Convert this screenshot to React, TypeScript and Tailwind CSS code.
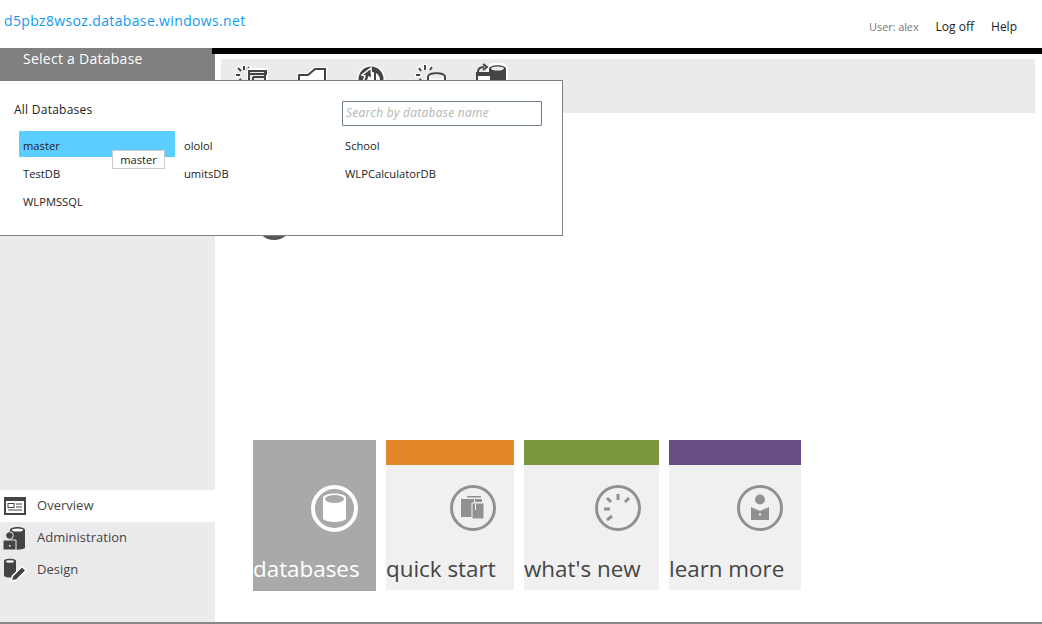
import React from "react";

const font = "font-['Open_Sans',sans-serif]";

const databases = ["master", "ololol", "School", "TestDB", "umitsDB", "WLPCalculatorDB", "WLPMSSQL"];

const ToolbarIcons = () => (
  <div className="flex h-[54px] w-[814px] gap-[26px] bg-[#ebebed] pl-[13px] pt-[4px]">
    {/* spinner + box */}
    <svg width="34" height="30" viewBox="0 0 34 30" fill="none">
      <path d="M10 2v5M3 4l3 3M1 12h5M4 20l3-3M16 3l-2 3" stroke="#fff" strokeWidth="4" />
      <path d="M10 3v4M4 5l3 3M2 12h4M4 19l3-3M15 4l-2 3" stroke="#444" strokeWidth="2" />
      <rect x="13" y="5" width="21" height="20" fill="#fff" />
      <path d="M15 8h17v16H15z" fill="#ebebed" />
      <path d="M15 8h17v3H15zM19 14h13M15 8v16M31 8v16M19 14v10" stroke="#444" strokeWidth="2" fill="none" />
    </svg>
    {/* folder */}
    <svg width="34" height="30" viewBox="0 0 34 30" fill="none">
      <path d="M3 26V10h10l7-6h13v22z" fill="#fff" />
      <path d="M5 25V12h9l7-6h10v19" stroke="#444" strokeWidth="2" fill="none" />
    </svg>
    {/* refresh */}
    <svg width="34" height="30" viewBox="0 0 34 30" fill="none">
      <circle cx="17" cy="16" r="14" fill="#fff" />
      <circle cx="17" cy="16" r="12.500" fill="#444" />
      <circle cx="18" cy="17" r="8" fill="#fff" />
      <path d="M7 25l4-12-3-1 9-7 1 11-3-2-4 11z" fill="#444" stroke="#fff" strokeWidth="1.500" />
      <path d="M21 8v9" stroke="#444" strokeWidth="2" />
    </svg>
    {/* spinner + cylinder */}
    <svg width="34" height="30" viewBox="0 0 34 30" fill="none">
      <path d="M11 1v6M18 3l-2 4M4 4l3 3M1 12h5M4 20l3-3" stroke="#fff" strokeWidth="4" />
      <path d="M11 2v5M18 4l-2 3M5 5l2 3M2 12h4M4 19l3-3" stroke="#444" strokeWidth="2" />
      <path d="M14 14c0-5 17-5 17 0v12H14z" fill="#fff" stroke="#444" strokeWidth="2" />
      <ellipse cx="22.500" cy="14" rx="7" ry="2.500" fill="#ebebed" />
    </svg>
    {/* export to cylinder */}
    <svg width="34" height="30" viewBox="0 0 34 30" fill="none">
      <rect x="13" y="0" width="21" height="28" rx="6" fill="#fff" />
      <path d="M15 6c0-5 17-5 17 0v20H15z" fill="#444" />
      <ellipse cx="23.500" cy="5.500" rx="6.500" ry="2" fill="#ebebed" />
      <path d="M4 9c0-3 2-5 6-5M9 1l4 3-4 3" stroke="#444" strokeWidth="2" fill="none" />
      <rect x="3" y="10" width="14" height="12" fill="#fff" stroke="#444" strokeWidth="2" />
      <rect x="3" y="10" width="14" height="3" fill="#444" />
    </svg>
  </div>
);

const SidebarItem = ({ label, active, children }: { label: string; active?: boolean; children: React.ReactNode }) => (
  <div className={`flex h-8 items-center gap-[10px] pl-[3px] ${active ? "bg-white" : ""}`}>
    <span className="flex h-6 w-6 items-center justify-center">{children}</span>
    <span className="text-[13px] tracking-[0.02px] text-[#444]">{label}</span>
  </div>
);

const Tile = ({
  label,
  width,
  band,
  light,
  children,
}: {
  label: string;
  width: string;
  band?: string;
  light?: boolean;
  children: React.ReactNode;
}) => (
  <div className={`flex flex-col ${width} ${light ? "h-[151px] bg-[#a9a9a9]" : "h-[150px] bg-[#f0f0f0]"}`}>
    <div className={`h-[25px] shrink-0 ${band ?? ""}`} />
    <div className="flex justify-end pr-[18px] pt-[20px]">{children}</div>
    <div
      className={`whitespace-nowrap text-[22.400px] leading-[32px] ${
        light ? "mt-[21px] text-white" : "mt-[22px] text-[#454545]"
      }`}
    >
      {label}
    </div>
  </div>
);

export default function App() {
  return (
    <div className={`relative flex h-[624px] w-[1042px] flex-col overflow-hidden bg-white ${font}`}>
      <header className="flex h-12 shrink-0 items-start justify-between">
        <div className="pl-1 pt-[11px] text-[14px] leading-[20px] tracking-[0.35px] text-[#0f9bef]">
          d5pbz8wsoz.database.windows.net
        </div>
        <div className="flex items-center pr-[25px] pt-[18px] text-[12px] leading-[18px]">
          <span className="mr-[17px] text-[11px] tracking-[-0.1px] text-[#777]">User: alex</span>
          <span className="mr-[17px] text-[#222]">Log off</span>
          <span className="text-[#222]">Help</span>
        </div>
      </header>

      <div className="flex min-h-0 flex-1 border-b-2 border-[#888]">
        <aside className="flex w-[215px] shrink-0 flex-col bg-[#ebebed]">
          <div className="h-8 w-full bg-[#808080] pl-[23px] pt-[1px] text-[14px] leading-[20px] tracking-[0.26px] text-white">
            Select a Database
          </div>
          <div className="flex-1" />
          <nav className="mb-[36px]">
            <SidebarItem label="Overview" active>
              <svg width="22" height="18" viewBox="0 0 22 18">
                <rect x="1" y="1" width="20" height="16" fill="none" stroke="#444" strokeWidth="2" />
                <path d="M1 1h20v3H1z" fill="#444" />
                <rect x="4" y="6.500" width="6" height="4" fill="none" stroke="#444" />
                <path d="M12 7h6M12 10h6M4 13h14" stroke="#444" />
              </svg>
            </SidebarItem>
            <SidebarItem label="Administration">
              <svg width="24" height="24" viewBox="0 0 24 24">
                <path d="M7 4c0-4 15-4 15 0v18c-3 2-9 2-13 1V15H6z" fill="#444" />
                <ellipse cx="14.500" cy="4" rx="5.500" ry="1.500" fill="#fff" />
                <circle cx="6.500" cy="9.500" r="3.800" fill="#444" stroke="#ebebed" />
                <path d="M0 14h13v10H0z" fill="#444" stroke="#ebebed" />
                <rect x="6" y="19" width="1.500" height="1.500" fill="#fff" />
              </svg>
            </SidebarItem>
            <SidebarItem label="Design">
              <svg width="24" height="24" viewBox="0 0 24 24">
                <path d="M1 3c0-3 12-3 12 0v15c-2 2-9 2-12 0z" fill="#444" />
                <ellipse cx="7" cy="3.500" rx="4" ry="1.200" fill="#fff" />
                <path d="M8 23l1.500-5L19 8.500l4 4-9.500 9.500z" fill="#444" stroke="#fff" strokeWidth="1.500" />
              </svg>
            </SidebarItem>
          </nav>
        </aside>

        <main className="flex min-w-0 flex-1 flex-col">
          <div className="-ml-[3px] h-[6px] shrink-0 bg-black" />
          <div className="pl-[6px] pt-[5px]">
            <ToolbarIcons />
          </div>
          <div className="ml-[41px] mt-[91px] h-9 w-9 rounded-full bg-[#555]" />
          <div className="ml-[38px] mt-[200px] flex items-start gap-[10px]">
            <Tile label="databases" width="w-[123px]" light>
              <svg width="47" height="47" viewBox="0 0 47 47">
                <circle cx="23.500" cy="23.500" r="21.500" fill="none" stroke="#fff" strokeWidth="4" />
                <path d="M12 13c0-6 23-6 23 0v21c-4 4-19 4-23 0z" fill="#fff" />
                <ellipse cx="23.500" cy="14" rx="9.500" ry="4" fill="#a9a9a9" />
              </svg>
            </Tile>
            <Tile label="quick start" width="w-[128px]" band="bg-[#e2882b]">
              <svg width="46" height="46" viewBox="0 0 46 46">
                <circle cx="23" cy="23" r="21.500" fill="none" stroke="#919191" strokeWidth="3" />
                <path d="M11 14h13v18H11zM17 11h14v1.500H17z" fill="#919191" />
                <path d="M22 18h12v16H22z" fill="#919191" stroke="#f0f0f0" />
                <path d="M25 14h7v3h-7z" fill="#919191" />
                <path d="M25 19h1v6h-1z" fill="#f0f0f0" />
              </svg>
            </Tile>
            <Tile label="what's new" width="w-[135px]" band="bg-[#7b963b]">
              <svg width="46" height="46" viewBox="0 0 46 46">
                <circle cx="23" cy="23" r="21.500" fill="none" stroke="#919191" strokeWidth="3" />
                <path d="M23 9v6M34 13l-4 4M12 13l4 4M9 24h6M12 35l5-4" stroke="#919191" strokeWidth="3" fill="none" />
              </svg>
            </Tile>
            <Tile label="learn more" width="w-[132px]" band="bg-[#674e82]">
              <svg width="46" height="46" viewBox="0 0 46 46">
                <circle cx="23" cy="23" r="21.500" fill="none" stroke="#919191" strokeWidth="3" />
                <circle cx="23" cy="14.500" r="5" fill="#919191" />
                <path d="M14 22l9 4 9-4v13H14z" fill="#919191" />
                <rect x="22" y="28.500" width="2" height="2" fill="#f0f0f0" />
              </svg>
            </Tile>
          </div>
        </main>
      </div>

      {/* database picker flyout */}
      <div className="absolute left-0 top-[80px] h-[156px] w-[563px] border border-l-0 border-[#808080] bg-white text-[#222]">
        <div className="flex items-start justify-between pl-[14px] pr-5 pt-[20px]">
          <div className="text-[12px] leading-[17px] tracking-[0.25px]">All Databases</div>
          <div className="h-[25px] w-[200px] rounded-[1px] border border-[#6a7b8c] pl-[3px] text-[12px] italic leading-[22px] tracking-[0.25px] text-[#b5b5b5]">
            Search by database name
          </div>
        </div>
        <div className="mt-[5px] grid grid-cols-[161px_161px_161px] pl-[19px]">
          {databases.map((name) => (
            <div key={name} className="h-7">
              <div
                className={`h-[26px] w-[156px] rounded-[1px] pl-1 text-[11.200px] leading-[29px] ${
                  name === "master" ? "bg-[#5bcdff]" : ""
                }`}
              >
                {name}
              </div>
            </div>
          ))}
        </div>
        <div className="absolute left-[112px] top-[69px] h-[19px] w-[53px] border border-[#ccc] bg-white text-center text-[11.200px] leading-[17px]">
          master
        </div>
      </div>
    </div>
  );
}
